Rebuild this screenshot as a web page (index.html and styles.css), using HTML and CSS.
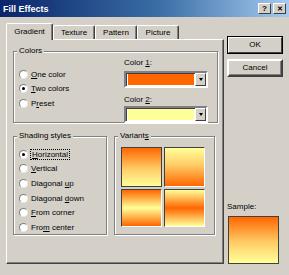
FILE: index.html
```html
<!DOCTYPE html>
<html lang="en">
<head>
    <meta charset="UTF-8">
    <title>Fill Effects</title>
    <link rel="stylesheet" href="styles.css">
</head>
<body>
    <div class="window">
        <div class="titlebar">
            <span class="title">Fill Effects</span>
            <span class="tb-btn">?</span>
            <span class="tb-btn close">&#x2715;</span>
        </div>
        <div class="content">
            <div class="left">
                <div class="tabs">
                    <div class="tab active">Gradient</div>
                    <div class="tab">Texture</div>
                    <div class="tab">Pattern</div>
                    <div class="tab">Picture</div>
                </div>
                <div class="panel">
                    <fieldset class="group colors">
                        <legend>Colors</legend>
                        <div class="radios">
                            <div class="radio"><span class="dot"></span><span><u>O</u>ne color</span></div>
                            <div class="radio"><span class="dot checked"></span><span><u>T</u>wo colors</span></div>
                            <div class="radio"><span class="dot"></span><span>P<u>r</u>eset</span></div>
                        </div>
                        <div class="pickers">
                            <div class="pick-label">Color <u>1</u>:</div>
                            <div class="combo">
                                <span class="swatch orange"></span>
                                <span class="drop"></span>
                            </div>
                            <div class="pick-label second">Color <u>2</u>:</div>
                            <div class="combo">
                                <span class="swatch yellow"></span>
                                <span class="drop"></span>
                            </div>
                        </div>
                    </fieldset>
                    <div class="lower">
                        <fieldset class="group shading">
                            <legend>Shading styles</legend>
                            <div class="radio"><span class="dot checked"></span><span class="focus"><u>H</u>orizontal</span></div>
                            <div class="radio"><span class="dot"></span><span><u>V</u>ertical</span></div>
                            <div class="radio"><span class="dot"></span><span>Diagonal <u>u</u>p</span></div>
                            <div class="radio"><span class="dot"></span><span>Diagonal <u>d</u>own</span></div>
                            <div class="radio"><span class="dot"></span><span><u>F</u>rom corner</span></div>
                            <div class="radio"><span class="dot"></span><span>Fro<u>m</u> center</span></div>
                        </fieldset>
                        <fieldset class="group variants">
                            <legend>Variant<u>s</u></legend>
                            <div class="tiles">
                                <div class="tile v1 selected"></div>
                                <div class="tile v2"></div>
                                <div class="tile v3"></div>
                                <div class="tile v4"></div>
                            </div>
                        </fieldset>
                    </div>
                </div>
            </div>
            <div class="right">
                <div class="button default"><span>OK</span></div>
                <div class="button">Cancel</div>
                <div class="sample-label">Sample:</div>
                <div class="sample"></div>
            </div>
        </div>
    </div>
</body>
</html>
```

FILE: styles.css
```css
body {
    margin: 0;
    background: #d4d0c8;
    font-family: "Liberation Sans", Arial, sans-serif;
    font-size: 8px;
    color: #000;
}
.window {
    width: 289px;
    height: 275px;
    display: flex;
    flex-direction: column;
    overflow: hidden;
}
.titlebar {
    height: 17px;
    background: linear-gradient(to right, #0a246a, #3a6ea5 55%, #a6caf0);
    display: flex;
    align-items: center;
    padding: 0 3px;
    color: #fff;
    font-weight: bold;
    font-size: 9px;
}
.title {
    flex: 1;
}
.tb-btn {
    width: 11px;
    height: 9px;
    margin-left: 2px;
    background: #d4d0c8;
    border: 1px solid;
    border-color: #fff #404040 #404040 #fff;
    color: #000;
    font-size: 8px;
    line-height: 9px;
    text-align: center;
}
.tb-btn.close {
    font-size: 7px;
}
.content {
    display: flex;
    padding: 6px 0 0 6px;
}
.left {
    width: 216px;
}
.tabs {
    display: flex;
    align-items: flex-end;
    height: 16px;
    position: relative;
    z-index: 1;
}
.tab {
    height: 13px;
    line-height: 13px;
    width: 40px;
    text-align: center;
    border: 1px solid;
    border-bottom: none;
    border-color: #fff #404040 #404040 #fff;
    border-radius: 2px 2px 0 0;
    box-shadow: inset -1px 0 #808080;
}
.tab.active {
    width: 45px;
    height: 16px;
    line-height: 15px;
    margin-bottom: -1px;
    background: #d4d0c8;
}
.panel {
    width: 205px;
    height: 217px;
    border: 1px solid;
    border-color: #fff #404040 #404040 #fff;
    box-shadow: inset -1px -1px #808080;
    padding: 6px 5px 0 6px;
}
.group {
    margin: 0;
    padding: 0;
    border: 1px solid #808080;
    box-shadow: 1px 1px 0 #fff, inset 1px 1px 0 #fff;
    min-width: 0;
}
.group legend {
    padding: 0 2px;
    margin-left: 3px;
    line-height: 10px;
    background: #d4d0c8;
}
.colors {
    height: 77px;
    display: flex;
    box-sizing: border-box;
}
.radios {
    padding-top: 11px;
    width: 100px;
}
.radio {
    display: flex;
    align-items: center;
    height: 14.6px;
    padding-left: 5px;
    gap: 3px;
    white-space: nowrap;
}
.dot {
    width: 7px;
    height: 7px;
    border-radius: 50%;
    background: #fff;
    border: 1px solid;
    border-color: #808080 #e8e8e8 #e8e8e8 #808080;
    display: flex;
    align-items: center;
    justify-content: center;
    flex: none;
}
.dot.checked::after {
    content: "";
    width: 3px;
    height: 3px;
    border-radius: 50%;
    background: #000;
}
.focus {
    outline: 1px dotted #000;
    outline-offset: 0;
    padding: 0 1px;
}
.pickers {
    margin-left: auto;
    margin-right: 9px;
    width: 84px;
    padding-top: 2px;
}
.pick-label {
    line-height: 10px;
    margin-bottom: 3px;
}
.pick-label.second {
    margin-top: 7px;
    margin-bottom: 1px;
}
.combo {
    height: 11px;
    display: flex;
    border: 2px solid;
    border-color: #808080 #fff #fff #808080;
    box-shadow: inset 1px 1px #404040;
    padding: 1px 1px 1px 2px;
    gap: 1px;
    background: #fff;
}
.swatch {
    flex: 1;
}
.orange {
    background: #ff6600;
}
.yellow {
    background: #ffff99;
}
.drop {
    width: 9px;
    background: #d4d0c8;
    border: 1px solid;
    border-color: #fff #404040 #404040 #fff;
    margin: -1px -1px -1px 0;
    display: flex;
    align-items: center;
    justify-content: center;
}
.drop::after {
    content: "";
    border-left: 2.5px solid transparent;
    border-right: 2.5px solid transparent;
    border-top: 3px solid #000;
}
.lower {
    display: flex;
    gap: 7px;
    margin-top: 8px;
}
.shading {
    width: 94px;
    height: 104px;
    box-sizing: border-box;
    padding-top: 6px;
}
.variants {
    width: 101px;
    height: 104px;
    box-sizing: border-box;
}
.tiles {
    display: grid;
    grid-template-columns: 41px 41px;
    grid-template-rows: 40px 38px;
    gap: 2px;
    padding: 6px 0 0 6px;
}
.tile {
    border: 1px solid;
    border-color: #404040 #fff #fff #404040;
}
.tile.selected {
    border-color: #404040;
}
.v1 {
    background: linear-gradient(#ff6600, #ffcc66 55%, #ffff99);
}
.v2 {
    background: linear-gradient(#ffff99, #ffcc66 45%, #ff6600);
}
.v3 {
    background: linear-gradient(#ff6600, #ffff99 50%, #ff6600);
}
.v4 {
    background: linear-gradient(#ffff99, #ff6600 50%, #ffff99);
}
.right {
    margin-left: 5px;
    width: 56px;
    padding-top: 13px;
    display: flex;
    flex-direction: column;
}
.button {
    height: 14px;
    line-height: 14px;
    text-align: center;
    border: 2px solid;
    border-color: #fff #404040 #404040 #fff;
    box-shadow: inset -1px -1px #808080;
    margin-bottom: 5px;
}
.button.default {
    border: 1px solid #000;
    height: 16px;
    line-height: 16px;
    box-shadow: none;
    display: flex;
}
.button.default span {
    flex: 1;
    border: 1px solid;
    border-color: #fff #404040 #404040 #fff;
    line-height: 14px;
}
.sample-label {
    margin-top: 120px;
    line-height: 10px;
    margin-bottom: 4px;
}
.sample {
    width: 49px;
    height: 46px;
    margin-left: 1px;
    border: 1px solid #404040;
    background: linear-gradient(#ff6600, #ffcc66 55%, #ffff99);
}
```
